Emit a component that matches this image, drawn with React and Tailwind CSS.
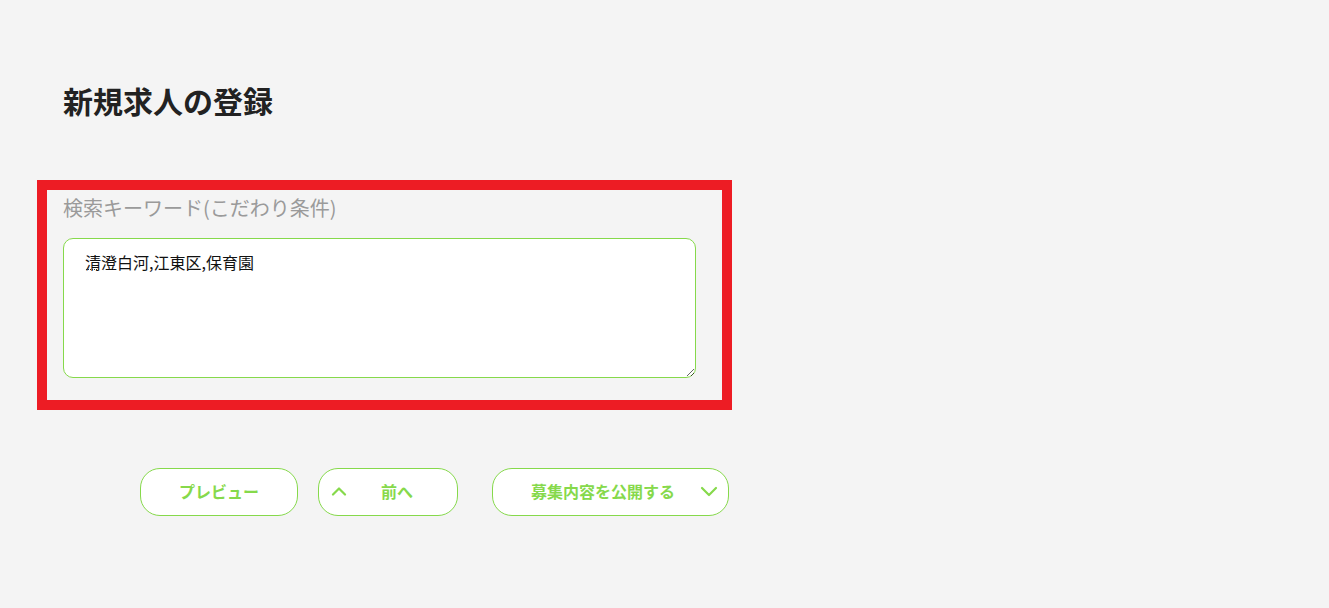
import React from "react";

const font = { fontFamily: '"Noto Sans CJK JP", "Noto Sans", sans-serif' };

function ChevronUp() {
  return (
    <svg width="16" height="10" viewBox="0 0 16 10" fill="none">
      <path d="M2 8.5 L8 2.5 L14 8.5" stroke="#86d94b" strokeWidth="2.2" strokeLinecap="round" strokeLinejoin="round" />
    </svg>
  );
}

function ChevronDown() {
  return (
    <svg width="18" height="11" viewBox="0 0 18 11" fill="none">
      <path d="M2 2 L9 9 L16 2" stroke="#86d94b" strokeWidth="2.2" strokeLinecap="round" strokeLinejoin="round" />
    </svg>
  );
}

export default function App() {
  return (
    <div className="min-h-[608px] w-full bg-[#f4f4f4] pl-[37px] pt-[82px]" style={font}>
      <h1 className="ml-[26px] text-[30px] leading-[36px] font-bold text-[#222222]">新規求人の登録</h1>

      <div className="mt-[62px] w-[695px] border-[10px] border-[#ed1c24] pl-[16px] pr-[26px] pt-[4px] pb-[22px]">
        <div className="text-[20px] leading-[28px] text-[#9a9a9a]">検索キーワード(こだわり条件)</div>
        <div className="relative mt-[16px]">
          <textarea
            className="block w-[633px] h-[140px] rounded-[10px] border border-[#86d94b] bg-white px-[21px] pt-[11px] text-[16px] leading-[24px] text-[#111111] outline-none"
            style={font}
            defaultValue="清澄白河,江東区,保育園"
          />
          <span className="pointer-events-none absolute left-[23px] top-[31px] z-10 block h-[1px] w-[13px] border-t border-dotted border-[#333333]" />
        </div>
      </div>

      <div className="mt-[58px] ml-[103px] flex items-center">
        <button className="flex h-[48px] w-[158px] items-center justify-center rounded-[20px] border border-[#86d94b] bg-white pb-[2px] text-[16px] font-bold text-[#86d94b]" style={font}>
          プレビュー
        </button>
        <button className="ml-[20px] flex h-[48px] w-[140px] items-center rounded-[20px] border border-[#86d94b] bg-white pl-[12px] pb-[2px] text-[16px] font-bold text-[#86d94b]" style={font}>
          <ChevronUp />
          <span className="ml-[34px]">前へ</span>
        </button>
        <button className="ml-[34px] flex h-[48px] w-[237px] items-center rounded-[20px] border border-[#86d94b] bg-white pl-[38px] pr-[10px] pb-[2px] text-[16px] font-bold text-[#86d94b]" style={font}>
          <span>募集内容を公開する</span>
          <span className="ml-auto"><ChevronDown /></span>
        </button>
      </div>
    </div>
  );
}
